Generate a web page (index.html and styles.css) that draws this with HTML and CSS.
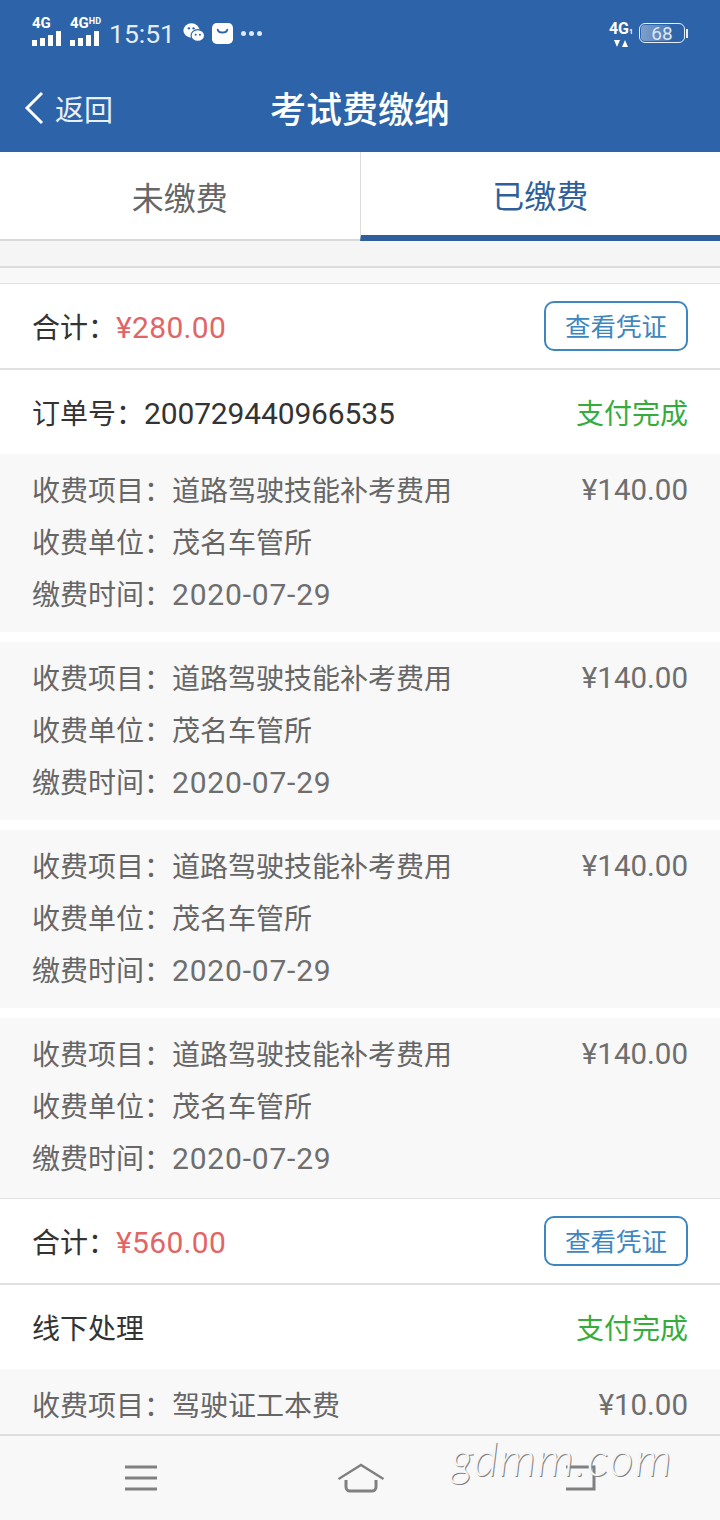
FILE: index.html
```html
<!DOCTYPE html>
<html lang="zh">
<head>
    <meta charset="UTF-8">
    <meta name="viewport" content="width=device-width, initial-scale=1.0">
    <title>考试费缴纳</title>
    <link rel="stylesheet" href="styles.css">
</head>
<body>
    <header class="app-header">
        <div class="status-bar">
            <div class="status-left">
                <span class="signal"><b>4G</b><i></i><i></i><i></i><i></i></span>
                <span class="signal"><b>4G<small>HD</small></b><i></i><i></i><i></i><i></i></span>
                <span class="clock">15:51</span>
                <svg class="status-icon" width="22" height="22" viewBox="0 0 26 24">
                    <ellipse cx="10" cy="9" rx="9.5" ry="8.5" fill="#fff"/>
                    <ellipse cx="17.5" cy="15" rx="8" ry="7" fill="#fff" stroke="#2d63a8" stroke-width="1.4"/>
                    <circle cx="7" cy="6.5" r="1.4" fill="#2d63a8"/>
                    <circle cx="12.5" cy="6.5" r="1.4" fill="#2d63a8"/>
                    <circle cx="15" cy="14" r="1.2" fill="#2d63a8"/>
                    <circle cx="20" cy="14" r="1.2" fill="#2d63a8"/>
                </svg>
                <svg class="status-icon" width="21" height="21" viewBox="0 0 22 22">
                    <rect x="0" y="0" width="22" height="22" rx="5" fill="#fff"/>
                    <path d="M6 7c1 4 9 4 10 0" fill="none" stroke="#2d63a8" stroke-width="2" stroke-linecap="round"/>
                </svg>
                <span class="dots"><i></i><i></i><i></i></span>
            </div>
            <div class="status-right">
                <span class="net"><b>4G<small>1</small></b>
                    <svg width="14" height="7" viewBox="0 0 14 7"><path d="M0 0h6L3 7zM8 7h6l-3-7z" fill="#fff"/></svg>
                </span>
                <span class="battery"><span class="battery-level"></span><span class="battery-num">68</span></span>
                <span class="battery-cap"></span>
            </div>
        </div>
        <div class="nav-bar">
            <div class="back">
                <svg width="22" height="34" viewBox="0 0 22 34"><path d="M19 2 4 17l15 15" fill="none" stroke="#fff" stroke-width="3"/></svg>
                <span>返回</span>
            </div>
            <h1>考试费缴纳</h1>
        </div>
    </header>

    <div class="tabs">
        <div class="tab">未缴费</div>
        <div class="tab active">已缴费</div>
    </div>

    <main class="content">
        <div class="gap-top"></div>
        <div class="gap-bottom"></div>

        <div class="total-row">
            <span>合计：<span class="money num">¥280.00</span></span>
            <button class="voucher">查看凭证</button>
        </div>
        <div class="order-row">
            <span>订单号：<span class="num order-no">200729440966535</span></span>
            <span class="paid">支付完成</span>
        </div>
        <div class="fee-item">
            <div class="fee-line"><span>收费项目：道路驾驶技能补考费用</span><span class="num price">¥140.00</span></div>
            <div class="fee-line"><span>收费单位：茂名车管所</span></div>
            <div class="fee-line"><span>缴费时间：<span class="num date">2020-07-29</span></span></div>
        </div>
        <div class="fee-item">
            <div class="fee-line"><span>收费项目：道路驾驶技能补考费用</span><span class="num price">¥140.00</span></div>
            <div class="fee-line"><span>收费单位：茂名车管所</span></div>
            <div class="fee-line"><span>缴费时间：<span class="num date">2020-07-29</span></span></div>
        </div>
        <div class="fee-item">
            <div class="fee-line"><span>收费项目：道路驾驶技能补考费用</span><span class="num price">¥140.00</span></div>
            <div class="fee-line"><span>收费单位：茂名车管所</span></div>
            <div class="fee-line"><span>缴费时间：<span class="num date">2020-07-29</span></span></div>
        </div>
        <div class="fee-item last">
            <div class="fee-line"><span>收费项目：道路驾驶技能补考费用</span><span class="num price">¥140.00</span></div>
            <div class="fee-line"><span>收费单位：茂名车管所</span></div>
            <div class="fee-line"><span>缴费时间：<span class="num date">2020-07-29</span></span></div>
        </div>

        <div class="total-row">
            <span>合计：<span class="money num">¥560.00</span></span>
            <button class="voucher">查看凭证</button>
        </div>
        <div class="order-row">
            <span>线下处理</span>
            <span class="paid">支付完成</span>
        </div>
        <div class="fee-item">
            <div class="fee-line"><span>收费项目：驾驶证工本费</span><span class="num price">¥10.00</span></div>
        </div>
    </main>

    <footer class="bottom-nav">
        <svg width="34" height="28" viewBox="0 0 34 28"><path d="M1 3h32M1 14h32M1 25h32" stroke="#808080" stroke-width="3"/></svg>
        <svg width="48" height="30" viewBox="0 0 48 30"><path d="M0.5 16 23 2l22.5 14" fill="none" stroke="#808080" stroke-width="2.4"/><path d="M8 17v7a4 4 0 0 0 4 4h22a4 4 0 0 0 4-4v-7" fill="none" stroke="#808080" stroke-width="3"/></svg>
        <svg width="31" height="26" viewBox="0 0 31 26"><path d="M1 2h28v22H1" fill="none" stroke="#808080" stroke-width="3"/></svg>
    </footer>

    <div class="watermark">gdmm.com</div>
</body>
</html>
```

FILE: styles.css
```css
body {
    margin: 0;
    width: 720px;
    height: 1520px;
    overflow: hidden;
    display: flex;
    flex-direction: column;
    position: relative;
    background-color: #fff;
    color: #333;
    font-family: 'Noto Sans CJK SC', 'Noto Sans', sans-serif;
    font-size: 28px;
}

.num {
    font-family: 'Roboto', sans-serif;
    font-size: 30px;
}

.order-no {
    letter-spacing: -0.15px;
}

.price {
    margin-top: 2px;
    font-size: 29.5px;
    color: #6e6e6e;
}

.date {
    letter-spacing: 0.8px;
    color: #6e6e6e;
}

/* blue header */
.app-header {
    height: 152px;
    flex: none;
    background-color: #2d63a8;
    color: #fff;
}

.status-bar {
    height: 66px;
    padding: 0 32px;
    display: flex;
    justify-content: space-between;
    align-items: center;
}

.status-left {
    display: flex;
    align-items: center;
    gap: 7px;
}

.signal {
    position: relative;
    width: 30px;
    height: 26px;
    margin-right: 1px;
    display: flex;
    align-items: flex-end;
    gap: 3px;
}

.signal b {
    position: absolute;
    top: -6px;
    left: 0;
    font: bold 15px 'Roboto', sans-serif;
    white-space: nowrap;
}

.signal small {
    font-size: 9px;
    vertical-align: 4px;
}

.signal i {
    width: 5px;
    height: 6px;
    background-color: #fff;
}

.signal i:nth-of-type(2) {
    height: 8px;
}

.signal i:nth-of-type(3) {
    height: 11px;
}

.signal i:nth-of-type(4) {
    height: 15px;
}

.clock {
    margin: 0 1px 0 1px;
    font: 26.5px 'Roboto', sans-serif;
    color: #e4edf7;
}

.status-icon {
    flex: none;
}

.dots {
    display: flex;
    gap: 3px;
    margin-left: 1px;
}

.dots i {
    width: 5px;
    height: 5px;
    border-radius: 50%;
    background-color: #dfe8f3;
}

.status-right {
    display: flex;
    align-items: center;
}

.net {
    width: 24px;
    margin-right: 6px;
    display: flex;
    flex-direction: column;
    align-items: center;
    gap: 2px;
    line-height: 1;
}

.net b {
    font: bold 16px 'Roboto', sans-serif;
}

.net small {
    font-size: 7px;
}

.battery {
    position: relative;
    width: 44px;
    height: 18px;
    border: 1px solid #e6eef8;
    border-radius: 6px;
    display: flex;
    justify-content: center;
    align-items: center;
}

.battery-level {
    position: absolute;
    left: 1px;
    top: 1px;
    bottom: 1px;
    width: 30px;
    border-radius: 4px;
    background: linear-gradient(to right, #7f9fcb, #4a79b5);
}

.battery-num {
    position: relative;
    font: 19px 'Roboto', sans-serif;
    color: #dbe6f3;
}

.battery-cap {
    width: 2px;
    height: 9px;
    margin-left: 1px;
    background-color: #e6eef8;
}

.nav-bar {
    position: relative;
    height: 86px;
    display: flex;
    align-items: center;
    justify-content: center;
}

.nav-bar h1 {
    margin: 0;
    font-size: 36px;
    font-weight: 500;
    position: relative;
    top: -2px;
}

.back {
    position: absolute;
    left: 23px;
    top: 21px;
    display: flex;
    align-items: center;
    gap: 10px;
    font-size: 29px;
    color: #e8f0f9;
}

/* tabs */
.tabs {
    height: 89px;
    flex: none;
    display: flex;
    background-color: #fff;
}

.tab {
    flex: 1;
    display: flex;
    align-items: center;
    justify-content: center;
    box-sizing: border-box;
    font-size: 32px;
    color: #666;
    border-bottom: 2px solid #d9d9d9;
}

.tab.active {
    color: #2f5f9b;
    border-left: 1px solid #ddd;
    border-bottom: 6px solid #2f5e9c;
}

/* list */
.content {
    flex: 1;
    min-height: 0;
    overflow: hidden;
}

.gap-top {
    height: 25px;
    background-color: #f5f5f5;
    border-bottom: 2px solid #ddd;
}

.gap-bottom {
    height: 15px;
    background-color: #f8f8f8;
}

.total-row,
.order-row {
    height: 84px;
    padding: 0 32px;
    display: flex;
    justify-content: space-between;
    align-items: center;
    background-color: #fff;
    border-top: 1px solid #e2e2e2;
}

.total-row {
    border-bottom: 2px solid #e0e0e0;
}

.order-row {
    border-top: 0;
}

.money {
    color: #e26565;
    letter-spacing: 0.3px;
}

.paid {
    color: #35ad3c;
}

.voucher {
    width: 144px;
    height: 50px;
    padding: 0 0 4px;
    border: 2px solid #3d86c0;
    border-radius: 10px;
    background-color: #fff;
    color: #3d86c0;
    font-family: inherit;
    font-size: 25.5px;
}

.fee-item {
    padding: 9px 32px 13px;
    margin-bottom: 10px;
    background-color: #f8f8f8;
    color: #666;
}

.fee-item.last {
    margin-bottom: 0;
    padding-bottom: 15px;
}

.fee-line {
    height: 52px;
    display: flex;
    justify-content: space-between;
    align-items: center;
}

/* bottom navigation */
.bottom-nav {
    height: 84px;
    flex: none;
    padding: 0 124px;
    display: flex;
    justify-content: space-between;
    align-items: center;
    background-color: #f8f8f8;
    border-top: 2px solid #dedede;
}

.watermark {
    position: absolute;
    left: 451px;
    top: 1430px;
    font: italic 300 47px 'Lato', sans-serif;
    letter-spacing: 1.3px;
    color: #f6f6f6;
    text-shadow: 1px 1px 0 #808080;
}
```
